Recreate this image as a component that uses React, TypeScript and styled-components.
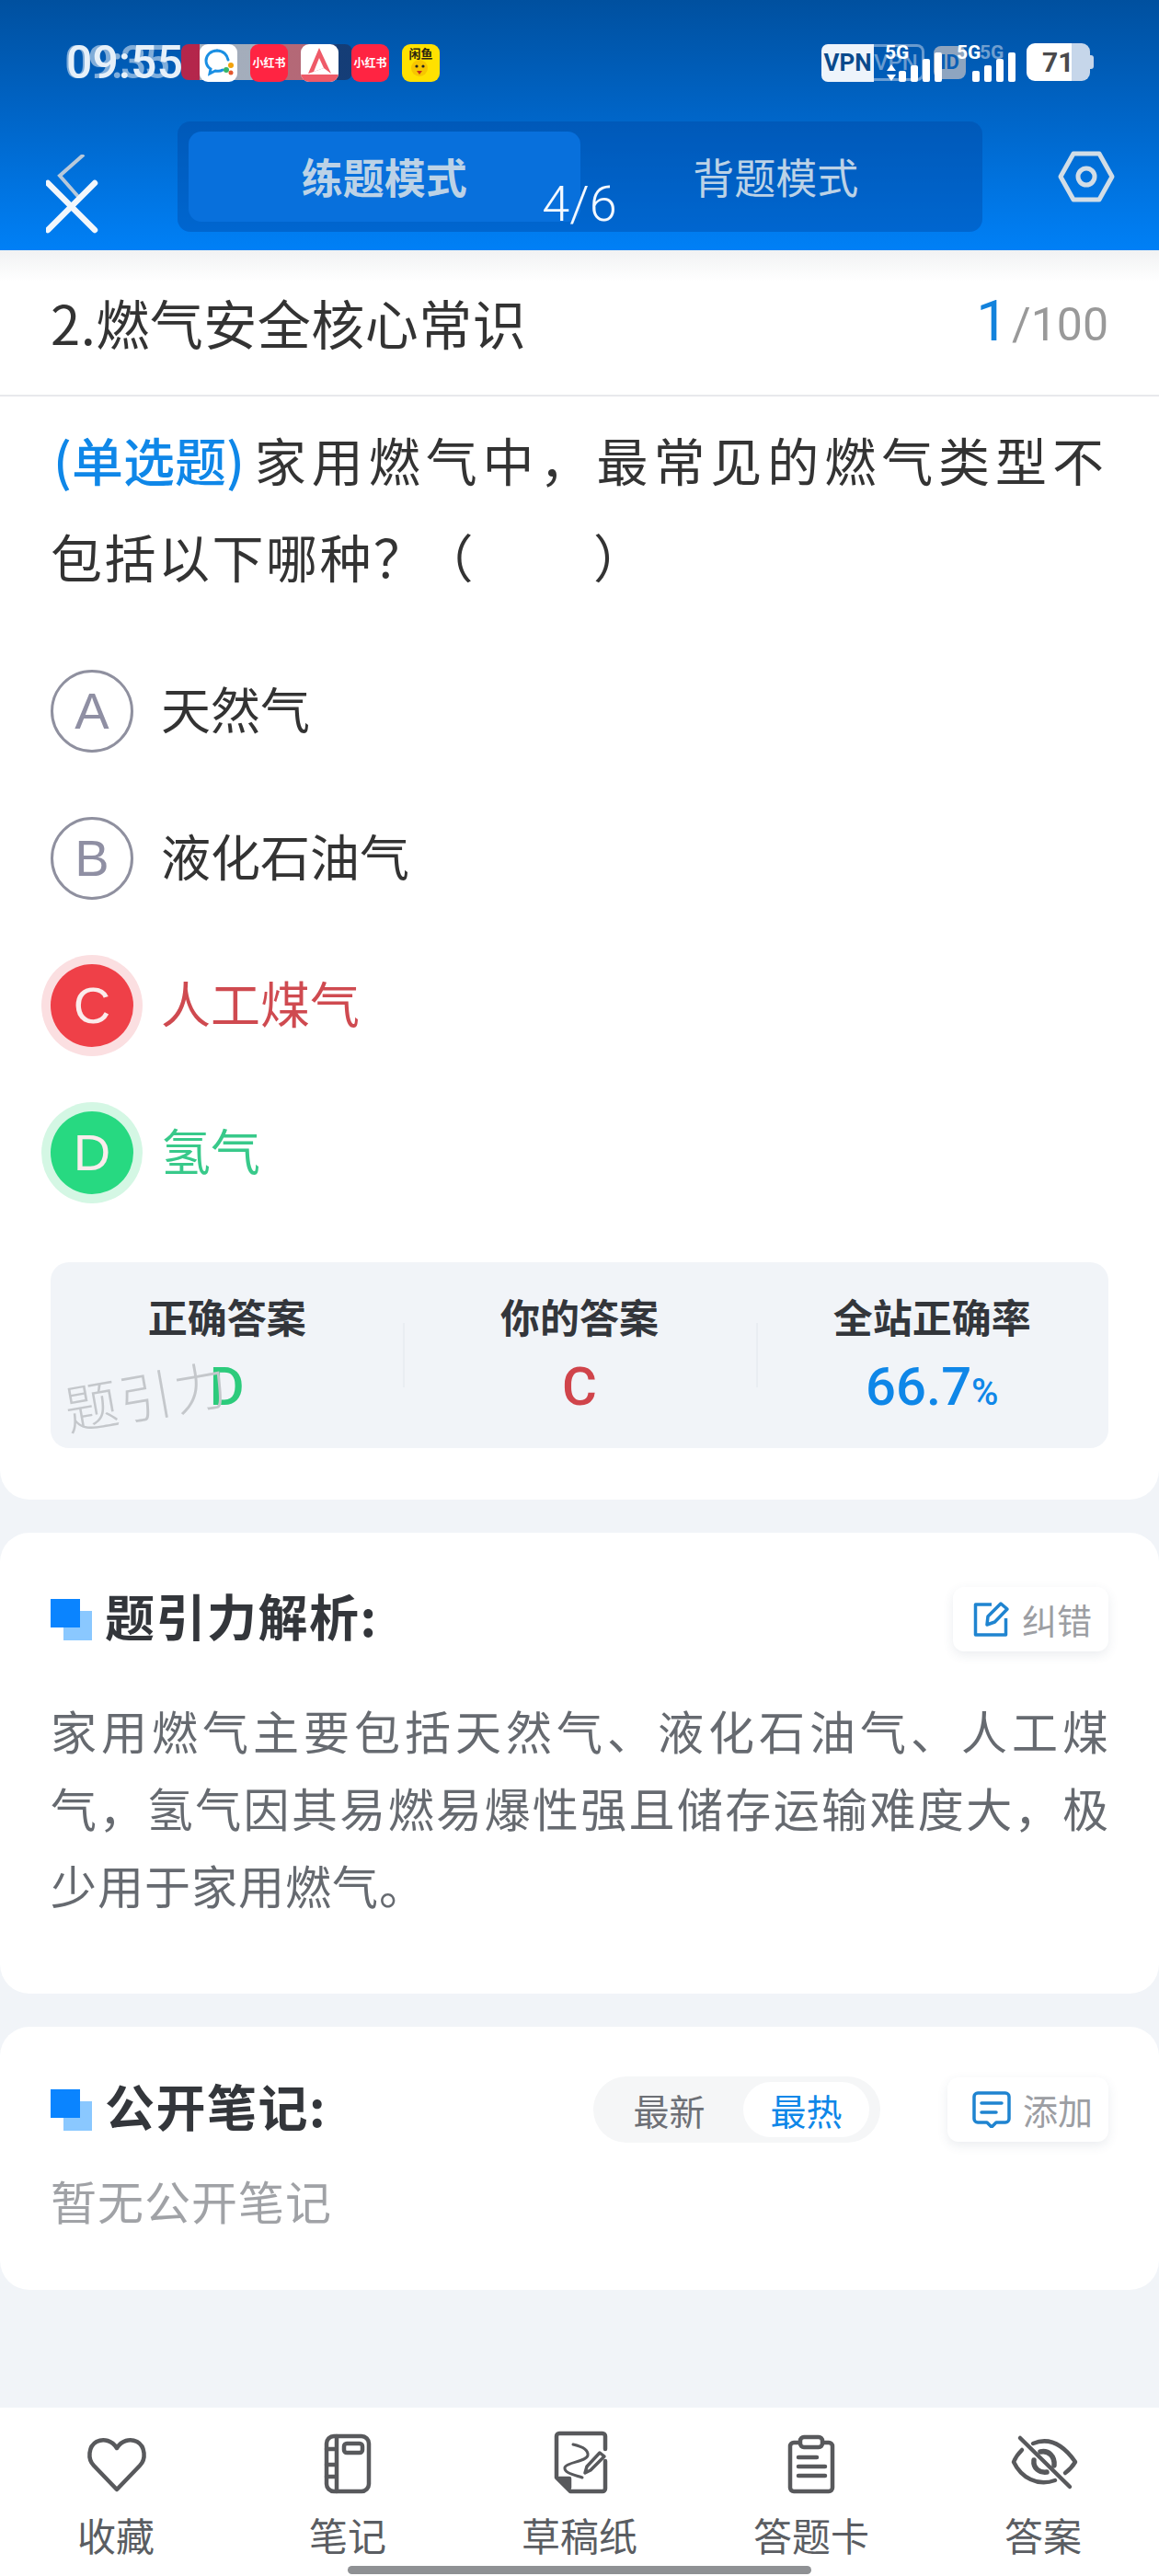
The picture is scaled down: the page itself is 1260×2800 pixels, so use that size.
import React from "react";
import styled, { createGlobalStyle } from "styled-components";

const CJK = `"Noto Sans CJK SC", "Noto Sans", sans-serif`;

const Global = createGlobalStyle`
  html, body { margin: 0; padding: 0; background: #f1f4f8; }
  * { box-sizing: border-box; }
  body { font-family: ${CJK}; }
`;

const Page = styled.div`
  width: 1260px;
  height: 2800px;
  display: flex;
  flex-direction: column;
  background: #f1f4f8;
  overflow: hidden;
  position: relative;
`;

/* ---------- header ---------- */
const Header = styled.header`
  height: 272px;
  flex: none;
  position: relative;
  background: linear-gradient(180deg, #00509f 0%, #0062c2 40%, #0080f6 100%);
  padding-top: 47px;
`;
const StatusBar = styled.div`
  height: 42px;
  position: relative;
  display: flex;
  align-items: center;
  padding: 0 75px 0 72px;
`;
const Time = styled.span`
  font-family: Roboto, sans-serif;
  font-weight: 500;
  font-size: 50px;
  line-height: 42px;
  color: #e6f0f9;
  width: 145px;
  flex: none;
  position: relative;
  z-index: 2;
`;
const GhostTime = styled.span`
  position: absolute;
  left: 70px;
  top: 0;
  font-family: Roboto, sans-serif;
  font-weight: 500;
  font-size: 50px;
  line-height: 42px;
  color: rgba(255, 255, 255, 0.5);
  z-index: 1;
  letter-spacing: -3px;
`;
const AppRow = styled.div`
  display: flex;
  gap: 14px;
  position: relative;
  z-index: 2;
`;
const AppIcon = styled.div<{ $bg: string }>`
  width: 41px;
  height: 41px;
  border-radius: 9px;
  background: ${(p) => p.$bg};
  display: flex;
  align-items: center;
  justify-content: center;
  overflow: hidden;
  color: #fff;
  font-size: 12px;
  font-weight: 700;
  line-height: 1;
  white-space: nowrap;
`;
const GhostApps = styled.div`
  position: absolute;
  top: 1px;
  left: 197px;
  height: 39px;
  width: 186px;
  border-radius: 8px;
  background: linear-gradient(90deg, #c8203f 0 20px, #b6b6bc 20px 100px, #c86a70 100px 140px, #173a70 170px 186px);
  opacity: 0.9;
`;
const YellowIcon = styled(AppIcon)`
  color: #2a2410;
  font-size: 13px;
  flex-direction: column;
  justify-content: flex-start;
  padding-top: 3px;
  position: relative;
`;
const Indicators = styled.div`
  margin-left: auto;
  display: flex;
  align-items: center;
  position: relative;
  height: 42px;
  width: 292px;
`;
const VpnTag = styled.div`
  width: 57px;
  height: 41px;
  background: #eef4fb;
  border-radius: 7px 0 0 7px;
  color: #0a4a8c;
  font-family: Roboto, sans-serif;
  font-weight: 700;
  font-size: 26px;
  line-height: 41px;
  text-align: center;
  flex: none;
`;
const GhostVpn = styled.div`
  position: absolute;
  left: 57px;
  top: 1px;
  width: 55px;
  height: 40px;
  border: 3px solid rgba(210, 220, 235, 0.5);
  border-left: none;
  border-radius: 0 8px 8px 0;
  color: rgba(210, 220, 235, 0.5);
  font-family: Roboto, sans-serif;
  font-weight: 500;
  font-size: 24px;
  line-height: 34px;
`;
const GhostId = styled.div`
  position: absolute;
  left: 122px;
  top: 3px;
  width: 35px;
  height: 36px;
  background: rgba(190, 190, 195, 0.75);
  border-radius: 8px;
  color: #0a5fb5;
  font-family: Roboto, sans-serif;
  font-weight: 700;
  font-size: 22px;
  line-height: 36px;
  text-align: center;
`;
const FiveG = styled.span<{ $left: number; $ghost?: boolean }>`
  position: absolute;
  left: ${(p) => p.$left}px;
  top: -2px;
  font-family: Roboto, sans-serif;
  font-weight: 700;
  font-size: 21px;
  line-height: 24px;
  color: ${(p) => (p.$ghost ? "rgba(210,220,235,0.55)" : "#fff")};
`;
const SignalBars = styled.svg<{ $left: number }>`
  position: absolute;
  left: ${(p) => p.$left}px;
  top: 10px;
`;
const DataArrows = styled.svg`
  position: absolute;
  left: 71px;
  top: 23px;
`;
const Battery = styled.div`
  position: absolute;
  left: 223px;
  top: 0;
  width: 69px;
  height: 41px;
  border-radius: 9px;
  background: linear-gradient(90deg, #fff 0 49px, #c6d6ea 49px);
  color: #4a4a4c;
  font-family: Roboto, sans-serif;
  font-weight: 700;
  font-size: 30px;
  line-height: 41px;
  padding-left: 17px;
`;
const BatteryNub = styled.div`
  position: absolute;
  left: 292px;
  top: 13px;
  width: 4px;
  height: 15px;
  background: #c6d6ea;
  border-radius: 0 3px 3px 0;
`;

const NavRow = styled.div`
  margin-top: 43px;
  height: 120px;
  padding: 0 50px;
  display: flex;
  align-items: center;
  position: relative;
`;
const NavLeft = styled.div`
  width: 143px;
  flex: none;
  height: 120px;
  position: relative;
`;
const BackMark = styled.svg`
  position: absolute;
  left: 0;
  top: 36px;
`;
const Segmented = styled.div`
  width: 875px;
  height: 120px;
  flex: none;
  border-radius: 14px;
  background: rgba(0, 70, 160, 0.4);
  padding: 11px 12px;
  display: flex;
`;
const Seg = styled.div<{ $active?: boolean }>`
  flex: 1;
  border-radius: 14px;
  background: ${(p) => (p.$active ? "#0870dc" : "transparent")};
  color: #bcd2e6;
  font-size: 45px;
  font-weight: ${(p) => (p.$active ? 700 : 400)};
  line-height: 98px;
  text-align: center;
`;
const NavRight = styled.div`
  flex: 1;
  display: flex;
  justify-content: flex-end;
  margin-right: -2px;
`;
const Counter = styled.div`
  position: absolute;
  left: 0;
  right: 0;
  top: 194px;
  text-align: center;
  font-family: Roboto, sans-serif;
  font-weight: 300;
  font-size: 54px;
  line-height: 56px;
  color: #f4f9ff;
`;

/* ---------- content ---------- */
const Main = styled.main`
  flex: 1;
  display: flex;
  flex-direction: column;
  gap: 36px;
`;
const Card = styled.section`
  background: #fff;
  border-radius: 32px;
`;
const QuestionCard = styled(Card)`
  border-radius: 0 0 32px 32px;
  height: 1358px;
  position: relative;
`;
const TitleRow = styled.div`
  height: 159px;
  padding: 0 55px;
  display: flex;
  align-items: center;
  justify-content: space-between;
  background: linear-gradient(180deg, #f1f2f3 0, #fff 34px);
  border-bottom: 2px solid #e8e9ec;
`;
const TitleText = styled.h1`
  margin: -2px 0 0;
  font-size: 58px;
  font-weight: 400;
  letter-spacing: 0.5px;
  line-height: 70px;
  color: #333;
`;
const Progress = styled.div`
  display: flex;
  align-items: baseline;
  font-family: Roboto, sans-serif;
  color: #999;
  font-size: 50px;
  line-height: 70px;
`;
const ProgressNow = styled.span`
  color: #1282dc;
  font-size: 62px;
  margin-right: 4px;
`;
const QuestionText = styled.div`
  padding: 15px 55px 0;
  font-size: 56px;
  line-height: 105px;
  color: #333;
`;
const FirstLine = styled.div`
  text-align: justify;
  text-align-last: justify;
  letter-spacing: 5px;
`;
const SecondLine = styled.div`
  letter-spacing: 2.500px;
`;
const OpenParen = styled.span`
  margin-left: -6px;
`;
const AnswerBlank = styled.span`
  display: inline-block;
  width: 128px;
`;
const Kind = styled.span`
  display: inline-block;
  color: #0f87e8;
  font-weight: 500;
  letter-spacing: 0;
  margin: 0 10px 0 3px;
`;
const Options = styled.div`
  margin-top: 72px;
  padding: 0 55px;
  display: flex;
  flex-direction: column;
  gap: 70px;
`;
const Option = styled.div`
  display: flex;
  align-items: center;
  gap: 30px;
  height: 90px;
`;
type Tone = "idle" | "bad" | "good";
const toneFill: Record<Tone, string> = { idle: "#fff", bad: "#ef4048", good: "#27d981" };
const toneRing: Record<Tone, string> = { idle: "transparent", bad: "#fbdfe1", good: "#d4f7e4" };
const toneText: Record<Tone, string> = { idle: "#333", bad: "#cf4a50", good: "#38c98a" };
const Bubble = styled.div<{ $tone: Tone }>`
  width: 90px;
  height: 90px;
  flex: none;
  border-radius: 50%;
  background: ${(p) => toneFill[p.$tone]};
  border: ${(p) => (p.$tone === "idle" ? "3px solid #8f909f" : "none")};
  box-shadow: 0 0 0 10px ${(p) => toneRing[p.$tone]};
  color: ${(p) => (p.$tone === "idle" ? "#8f8fa3" : "#fbecec")};
  font-family: "Liberation Sans", sans-serif;
  font-size: 56px;
  display: flex;
  align-items: center;
  justify-content: center;
  line-height: 1;
`;
const OptionText = styled.span<{ $tone: Tone }>`
  margin-top: -6px;
  font-size: 54px;
  line-height: 70px;
  color: ${(p) => toneText[p.$tone]};
`;
const Stats = styled.div`
  margin: 74px 55px 0;
  height: 202px;
  border-radius: 20px;
  background: #f1f4f8;
  display: grid;
  grid-template-columns: repeat(3, 1fr);
  position: relative;
`;
const Stat = styled.div<{ $divider?: boolean }>`
  display: flex;
  flex-direction: column;
  align-items: center;
  padding-top: 30px;
  position: relative;
  &::before {
    content: "";
    display: ${(p) => (p.$divider ? "block" : "none")};
    position: absolute;
    left: 0;
    top: 66px;
    height: 70px;
    width: 2px;
    background: #e9edf2;
  }
`;
const StatLabel = styled.div`
  font-size: 43px;
  font-weight: 700;
  line-height: 56px;
  color: #33363b;
`;
const StatValue = styled.div<{ $color: string }>`
  margin-top: 14px;
  font-family: Roboto, sans-serif;
  font-size: 58px;
  font-weight: 500;
  line-height: 70px;
  color: ${(p) => p.$color};
`;
const Percent = styled.span`
  font-size: 40px;
`;
const Watermark = styled.div`
  position: absolute;
  left: 14px;
  top: 108px;
  font-size: 58px;
  font-weight: 300;
  line-height: 70px;
  color: #c4c7cb;
  transform: rotate(-10deg);
  white-space: nowrap;
  letter-spacing: 2px;
`;

const AnalysisCard = styled(Card)`
  height: 501px;
  padding: 58px 55px 0;
`;
const NotesCard = styled(Card)`
  height: 286px;
  padding: 54px 55px 0;
`;
const SectionHead = styled.div`
  display: flex;
  align-items: center;
  height: 72px;
`;
const Squares = styled.div`
  width: 45px;
  height: 45px;
  flex: none;
  margin-right: 14px;
  position: relative;
  background: linear-gradient(#8ac8ff, #8ac8ff) 14px 13px / 31px 32px no-repeat;
  &::after {
    content: "";
    position: absolute;
    left: 0;
    top: 0;
    width: 32px;
    height: 31px;
    background: #0a84ff;
  }
`;
const SectionTitle = styled.h2`
  margin: -8px 0 0;
  font-size: 54px;
  font-weight: 700;
  letter-spacing: 1.5px;
  line-height: 70px;
  color: #33363b;
`;
const ActionButton = styled.div`
  margin-left: auto;
  height: 70px;
  padding: 0 18px 0 22px;
  border-radius: 12px;
  background: #fff;
  box-shadow: 0 4px 12px rgba(60, 80, 110, 0.1);
  display: flex;
  align-items: center;
  gap: 13px;
  color: #9c9ea3;
  font-size: 38px;
  line-height: 50px;
`;
const Explanation = styled.div`
  margin-top: 42px;
  font-size: 50px;
  line-height: 84px;
  letter-spacing: 1px;
  color: #666a70;
`;
const JustLine = styled.div`
  text-align: justify;
  text-align-last: justify;
  letter-spacing: 0;
`;
const Toggle = styled.div`
  margin-left: auto;
  margin-right: 73px;
  width: 312px;
  height: 72px;
  border-radius: 36px;
  background: #f5f6f7;
  padding: 6px 12px 6px 2px;
  display: flex;
  align-items: center;
  font-size: 39px;
`;
const ToggleItem = styled.div<{ $on?: boolean }>`
  flex: ${(p) => (p.$on ? "0 0 137px" : "1")};
  height: 60px;
  line-height: 60px;
  text-align: center;
  border-radius: 30px;
  background: ${(p) => (p.$on ? "#fff" : "transparent")};
  color: ${(p) => (p.$on ? "#0f87e8" : "#6d7076")};
`;
const NotesButton = styled(ActionButton)`
  margin-left: 0;
  padding: 0 17px 0 27px;
`;
const EmptyNote = styled.div`
  margin-top: 27px;
  font-size: 50px;
  line-height: 70px;
  letter-spacing: 1px;
  color: #a0a2a6;
`;

/* ---------- bottom bar ---------- */
const TabBar = styled.nav`
  height: 183px;
  flex: none;
  background: #fff;
  display: grid;
  grid-template-columns: repeat(5, 1fr);
  position: relative;
`;
const Tab = styled.div`
  display: flex;
  flex-direction: column;
  align-items: center;
  padding-top: 30px;
`;
const TabIcon = styled.svg`
  width: 64px;
  height: 64px;
  overflow: visible;
  fill: none;
  stroke: #58595c;
  stroke-width: 4.5;
  stroke-linejoin: round;
  stroke-linecap: round;
`;
const TabLabel = styled.span`
  margin-top: 16px;
  font-size: 42px;
  line-height: 56px;
  color: #5a5d62;
`;
const HomeBar = styled.div`
  position: absolute;
  left: 378px;
  bottom: 2px;
  width: 504px;
  height: 9px;
  border-radius: 5px;
  background: #8f9194;
`;

const Bars = ({ left, h }: { left: number; h: number[] }) => (
  <SignalBars $left={left} width="50" height="32" viewBox="0 0 50 32">
    {h.map((v, i) => (
      <rect key={i} x={i * 13} y={32 - v} width="8" height={v} rx="2" fill="#fff" />
    ))}
  </SignalBars>
);

export default function App() {
  return (
    <Page>
      <Global />
      <Header>
        <StatusBar>
          <GhostTime>09:35</GhostTime>
          <GhostApps />
          <Time>09:55</Time>
          <AppRow>
            <AppIcon $bg="#fff">
              <svg width="34" height="34" viewBox="0 0 34 34" fill="none">
                <path d="M15 4C8 4 3 9 3 15c0 4 2 7 5 9l-1 5 6-3c3 .6 6 .4 8-1" stroke="#1a8fe3" strokeWidth="3" strokeLinecap="round" />
                <path d="M15 4c7 0 11 5 12 10" stroke="#1a8fe3" strokeWidth="3" strokeLinecap="round" />
                <circle cx="30" cy="20" r="3" fill="#f2a20c" />
                <circle cx="25" cy="25" r="3" fill="#35b56a" />
                <circle cx="30" cy="28" r="2.5" fill="#e4572e" />
              </svg>
            </AppIcon>
            <AppIcon $bg="#ff2442">小红书</AppIcon>
            <AppIcon $bg="#fff">
              <svg width="41" height="41" viewBox="0 0 41 41">
                <path d="M20 4 L33 32 L25 26 L14 30 L8 32 Z" fill="#ef5a68" />
                <path d="M20 15 L25 26 L14 30 Z" fill="#fff" />
                <rect x="0" y="33" width="41" height="8" fill="#ef5a68" />
              </svg>
            </AppIcon>
            <AppIcon $bg="#ff2442">小红书</AppIcon>
            <YellowIcon $bg="#ffe100">
              闲鱼
              <svg width="30" height="20" viewBox="0 0 30 20">
                <circle cx="13" cy="10" r="9" fill="#f7c600" />
                <circle cx="10" cy="8" r="1.6" fill="#222" />
                <circle cx="17" cy="8" r="1.6" fill="#222" />
                <path d="M10 13h6l-3 4z" fill="#c4301c" />
              </svg>
            </YellowIcon>
          </AppRow>
          <Indicators>
            <VpnTag>VPN</VpnTag>
            <GhostVpn>VPN</GhostVpn>
            <GhostId>ID</GhostId>
            <FiveG $left={69}>5G</FiveG>
            <DataArrows width="10" height="18" viewBox="0 0 10 18">
              <path d="M5 0 10 7H0zM5 18 0 11h10z" fill="#fff" />
            </DataArrows>
            <Bars left={84} h={[12, 18, 25, 32]} />
            <FiveG $left={147}>5G</FiveG>
            <FiveG $left={172} $ghost>
              5G
            </FiveG>
            <Bars left={164} h={[12, 18, 25, 32]} />
            <Battery>71</Battery>
            <BatteryNub />
          </Indicators>
        </StatusBar>
        <NavRow>
          <NavLeft>
            <BackMark width="60" height="90" viewBox="0 0 60 90" fill="none">
              <path d="M41 0 15 23l22 25" stroke="#b8c9da" strokeWidth="4" />
              <path d="M2 31 53 82M53 31 2 82" stroke="#f2f7fc" strokeWidth="6.5" strokeLinecap="round" />
            </BackMark>
          </NavLeft>
          <Segmented>
            <Seg $active>练题模式</Seg>
            <Seg>背题模式</Seg>
          </Segmented>
          <NavRight>
            <svg width="62" height="56" viewBox="0 0 62 56" fill="none">
              <path d="M17 3h28l14 25-14 25H17L3 28z" stroke="#d2dde6" strokeWidth="5" strokeLinejoin="round" />
              <circle cx="31" cy="28" r="9" stroke="#d2dde6" strokeWidth="5" />
            </svg>
          </NavRight>
        </NavRow>
        <Counter>4/6</Counter>
      </Header>

      <Main>
        <QuestionCard>
          <TitleRow>
            <TitleText>2.燃气安全核心常识</TitleText>
            <Progress>
              <ProgressNow>1</ProgressNow>/100
            </Progress>
          </TitleRow>
          <QuestionText>
            <FirstLine>
              <Kind>(单选题)</Kind>家用燃气中，最常见的燃气类型不
            </FirstLine>
            <SecondLine>
              包括以下哪种？<OpenParen>（</OpenParen>
              <AnswerBlank />）
            </SecondLine>
          </QuestionText>
          <Options>
            <Option>
              <Bubble $tone="idle">A</Bubble>
              <OptionText $tone="idle">天然气</OptionText>
            </Option>
            <Option>
              <Bubble $tone="idle">B</Bubble>
              <OptionText $tone="idle">液化石油气</OptionText>
            </Option>
            <Option>
              <Bubble $tone="bad">C</Bubble>
              <OptionText $tone="bad">人工煤气</OptionText>
            </Option>
            <Option>
              <Bubble $tone="good">D</Bubble>
              <OptionText $tone="good">氢气</OptionText>
            </Option>
          </Options>
          <Stats>
            <Stat>
              <StatLabel>正确答案</StatLabel>
              <StatValue $color="#2ccb7c">D</StatValue>
            </Stat>
            <Stat $divider>
              <StatLabel>你的答案</StatLabel>
              <StatValue $color="#d0444b">C</StatValue>
            </Stat>
            <Stat $divider>
              <StatLabel>全站正确率</StatLabel>
              <StatValue $color="#0f87e8">
                66.7<Percent>%</Percent>
              </StatValue>
            </Stat>
            <Watermark>题引力</Watermark>
          </Stats>
        </QuestionCard>

        <AnalysisCard>
          <SectionHead>
            <Squares />
            <SectionTitle>题引力解析:</SectionTitle>
            <ActionButton>
              <svg width="40" height="40" viewBox="0 0 40 40" fill="none" stroke="#1f84d0" strokeWidth="3.5" strokeLinejoin="round">
                <path d="M20 4H2.500v33h33V19" />
                <path d="M15 26l1-9L30 3l7 6-13.500 14z" />
              </svg>
              纠错
            </ActionButton>
          </SectionHead>
          <Explanation>
            <JustLine>家用燃气主要包括天然气、液化石油气、人工煤</JustLine>
            <JustLine>气，氢气因其易燃易爆性强且储存运输难度大，极</JustLine>
            <div>少用于家用燃气。</div>
          </Explanation>
        </AnalysisCard>

        <NotesCard>
          <SectionHead>
            <Squares />
            <SectionTitle>公开笔记:</SectionTitle>
            <Toggle>
              <ToggleItem>最新</ToggleItem>
              <ToggleItem $on>最热</ToggleItem>
            </Toggle>
            <NotesButton>
              <svg width="42" height="40" viewBox="0 0 42 40" fill="none" stroke="#1f84d0" strokeWidth="3.5">
                <path d="M6 2h30a4 4 0 0 1 4 4v24a4 4 0 0 1-4 4H26l-5 5-5-5H6a4 4 0 0 1-4-4V6a4 4 0 0 1 4-4z" strokeLinejoin="round" />
                <path d="M10 13h22M10 23h16" strokeLinecap="round" />
              </svg>
              添加
            </NotesButton>
          </SectionHead>
          <EmptyNote>暂无公开笔记</EmptyNote>
        </NotesCard>
      </Main>

      <TabBar>
        <Tab>
          <TabIcon viewBox="0 0 64 64">
            <path d="M33 59 8 33C1 26 2 12 11 7c8-4 17-1 22 7 5-8 14-11 22-7 9 5 10 19 3 26z" />
          </TabIcon>
          <TabLabel>收藏</TabLabel>
        </Tab>
        <Tab>
          <TabIcon viewBox="0 0 64 64">
            <rect x="9" y="1" width="46" height="60" rx="8" />
            <path d="M20 1v60M9 15h11M9 32h11M9 45h11" />
            <rect x="28" y="9" width="20" height="10" rx="3" />
          </TabIcon>
          <TabLabel>笔记</TabLabel>
        </Tab>
        <Tab>
          <TabIcon viewBox="8 9 64 64">
            <path d="M68 24V10a3 3 0 0 0-3-3H18a3 3 0 0 0-3 3v45l15 15h35a3 3 0 0 0 3-3V37" />
            <path d="M18 56h11v10z" fill="#58595c" />
            <path d="M33 19c9 2 17 5 16 12-2 7-23 7-25 13-1 6 10 8 19 11" strokeWidth="3" />
            <path d="M46 50l2-7 14-15 5 4-15 15z" strokeWidth="3.500" />
          </TabIcon>
          <TabLabel>草稿纸</TabLabel>
        </Tab>
        <Tab>
          <TabIcon viewBox="0 0 64 64">
            <path d="M19 8h-6a4 4 0 0 0-4 4v45a4 4 0 0 0 4 4h38a4 4 0 0 0 4-4V12a4 4 0 0 0-4-4h-6" />
            <rect x="20" y="2" width="24" height="11" rx="4" />
            <path d="M18 24h20M18 34h29M18 44h29" />
          </TabIcon>
          <TabLabel>答题卡</TabLabel>
        </Tab>
        <Tab>
          <TabIcon viewBox="7 9 64 64">
            <path d="M14 12 68 65" />
            <path d="M28 18C45 11 60 18 74 38c-3 5-7 9-11 12M16 25c-4 4-7 8-9 13 8 17 26 27 45 20" />
            <path d="M36 27c9-2 16 5 15 15M29 36c-1 9 6 14 14 13" strokeWidth="5.500" />
          </TabIcon>
          <TabLabel>答案</TabLabel>
        </Tab>
        <HomeBar />
      </TabBar>
    </Page>
  );
}
